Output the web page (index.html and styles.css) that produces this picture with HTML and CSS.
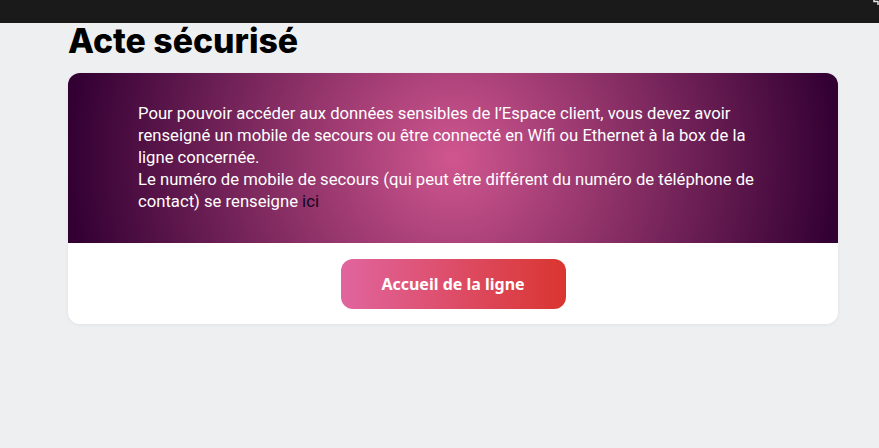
FILE: index.html
```html
<!DOCTYPE html>
<html lang="fr">
<head>
<meta charset="utf-8">
<title>Acte sécurisé</title>
<link rel="stylesheet" href="styles.css">
</head>
<body>
<header class="topbar"><svg class="topbar-icon" width="8" height="8" viewBox="0 0 8 8"><path d="M1 0v1.5h4.5M5 1.5v3.5M7 3.5v1.5" fill="none" stroke="#e8e8e8" stroke-width="1.5"/></svg></header>
<main class="page">
<h1 class="title">Acte sécurisé</h1>
<section class="card">
<div class="banner">
<p class="message">Pour pouvoir accéder aux données sensibles de l’Espace client, vous devez avoir renseigné un mobile de secours ou être connecté en Wifi ou Ethernet à la box de la ligne concernée.<br>Le numéro de mobile de secours (qui peut être différent du numéro de téléphone de contact) se renseigne <a class="link" href="#">ici</a></p>
</div>
<div class="actions"><a class="button" href="#">Accueil de la ligne</a></div>
</section>
</main>
</body>
</html>
```
FILE: styles.css
```css
* { box-sizing: border-box; }
html, body { margin: 0; height: 100%; overflow: hidden; }
body { background: #eeeff1; font-family: "Roboto", sans-serif; color: #000; }
.topbar { height: 23px; background: #1a1a1a; display: flex; justify-content: flex-end; overflow: hidden; }
.topbar-icon { margin-right: -2px; }
.page { padding: 0 41px 0 68px; }
.title { margin: 0; height: 50px; font-family: "Inter", sans-serif; font-size: 33.8px; font-weight: 800; line-height: 35px; }
.card { background: #fff; border-radius: 12px; overflow: hidden; box-shadow: 0 1px 4px rgba(0,0,0,.05); }
.banner { height: 170px; padding: 30px 70px 0; background: radial-gradient(circle 385px at 50% 50%, #d0568f 0%, #330033 100%); }
.message { margin: 0; width: 630px; font-size: 16.67px; line-height: 22px; color: #fff; }
.link { color: #14051f; text-decoration: none; }
.actions { display: flex; justify-content: center; padding: 16px 0 15px; }
.button { width: 225px; height: 50px; display: flex; align-items: center; justify-content: center; border-radius: 12px; background: linear-gradient(90deg, #e0659f, #da3530); color: #fff; font-family: "Noto Sans", sans-serif; font-size: 16px; font-weight: 700; text-decoration: none; }
```
